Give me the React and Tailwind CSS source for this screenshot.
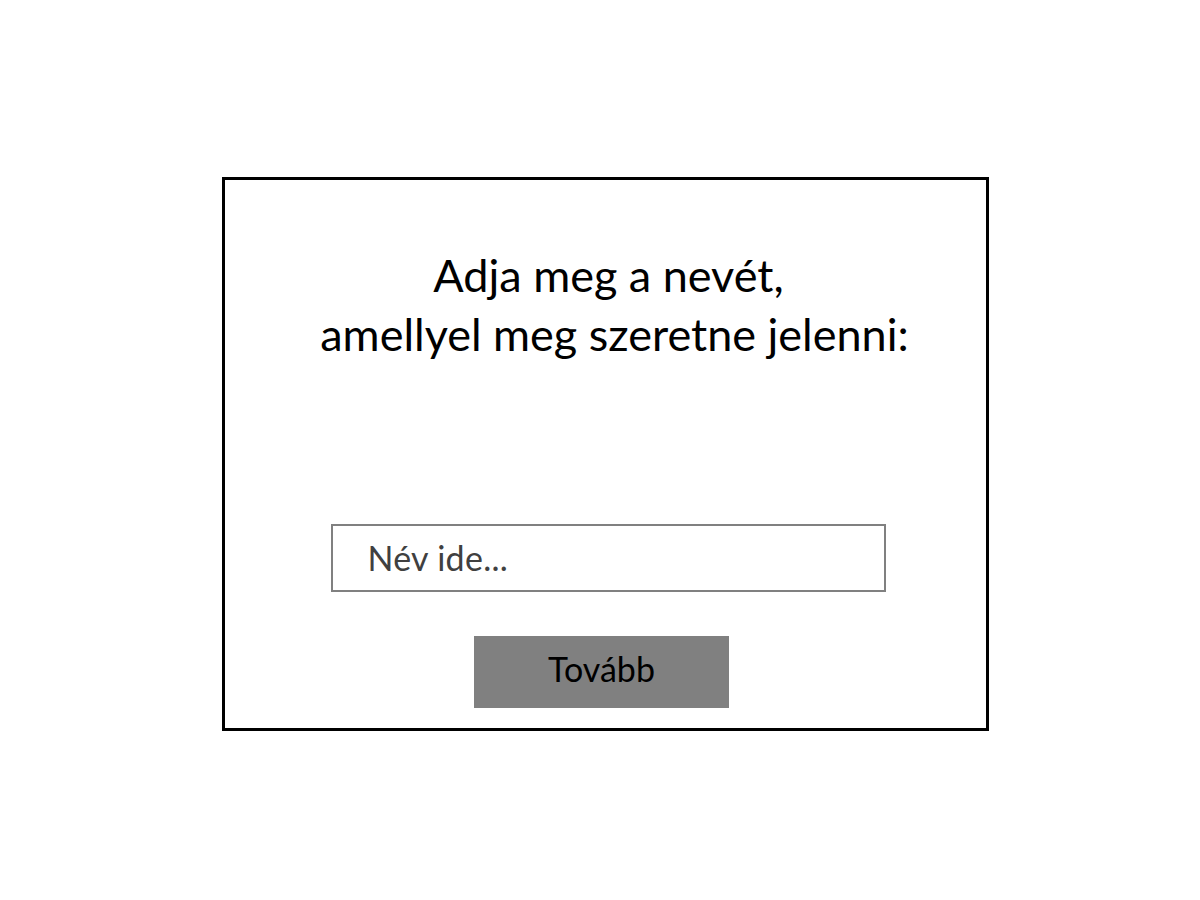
import React from "react";

export default function App() {
  return (
    <div className="h-[900px] w-[1200px] bg-white pt-[177px] pl-[222px]" style={{ fontFamily: "Lato, 'Open Sans', sans-serif" }}>
      <div className="flex h-[554px] w-[767px] flex-col items-center border-[3px] border-black">
        <h1 className="mt-[66px] text-center text-[45px] leading-[59px] text-black">
          <span className="block pl-[6px]">Adja meg a nevét,</span>
          <span className="block pl-[18px]">amellyel meg szeretne jelenni:</span>
        </h1>
        <input
          type="text"
          placeholder="Név ide..."
          className="ml-[5px] mt-[160px] h-[68px] w-[555px] border-2 border-[#808080] px-[35px] pb-[2px] text-[34px] tracking-[0.3px] text-[#404040] placeholder:text-[#404040] outline-none"
        />
        <button
          type="button"
          className="mr-[8px] mt-[44px] h-[72px] w-[255px] bg-[#808080] pb-[7px] text-[34px] text-black"
        >
          Tovább
        </button>
      </div>
    </div>
  );
}
